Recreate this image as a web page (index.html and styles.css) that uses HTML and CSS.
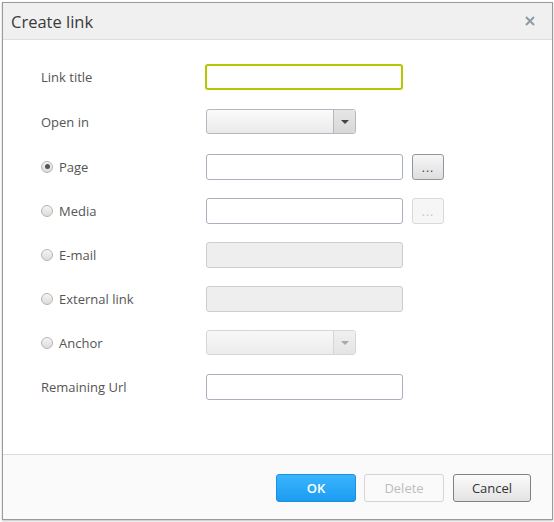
FILE: index.html
```html
<!DOCTYPE html>
<html>
<head>
<meta charset="utf-8">
<link rel="stylesheet" href="styles.css">
</head>
<body>
<div class="dialog">
  <div class="header">
    <span class="title">Create link</span>
    <svg class="close" width="10" height="10" viewBox="0 0 10 10"><path d="M1 1L9 9M9 1L1 9" stroke="#8d9ba5" stroke-width="2"/></svg>
  </div>
  <div class="body">
    <div class="row r-wide">
      <label class="lbl">Link title</label>
      <input class="inp focus" type="text">
    </div>
    <div class="row r-wide">
      <label class="lbl">Open in</label>
      <div class="select"><span class="sel-val"></span><span class="sel-btn"><span class="caret"></span></span></div>
    </div>
    <div class="row">
      <label class="lbl"><span class="radio checked"></span>Page</label>
      <input class="inp" type="text">
      <button class="dots">...</button>
    </div>
    <div class="row">
      <label class="lbl"><span class="radio"></span>Media</label>
      <input class="inp" type="text">
      <button class="dots disabled">...</button>
    </div>
    <div class="row">
      <label class="lbl"><span class="radio"></span>E-mail</label>
      <input class="inp disabled" type="text">
    </div>
    <div class="row">
      <label class="lbl"><span class="radio"></span>External link</label>
      <input class="inp disabled" type="text">
    </div>
    <div class="row">
      <label class="lbl"><span class="radio"></span>Anchor</label>
      <div class="select disabled"><span class="sel-val"></span><span class="sel-btn"><span class="caret"></span></span></div>
    </div>
    <div class="row">
      <label class="lbl">Remaining Url</label>
      <input class="inp" type="text">
    </div>
  </div>
  <div class="footer">
    <button class="btn ok">OK</button>
    <button class="btn del">Delete</button>
    <button class="btn cancel">Cancel</button>
  </div>
</div>
</body>
</html>
```
FILE: styles.css
```css
html, body { margin: 0; padding: 0; background: #fff; }
body { padding: 2px; font-family: "Open Sans", "Noto Sans", sans-serif; }
.dialog {
  width: 549px;
  height: 516px;
  border: 1px solid #9a9a9a;
  box-shadow: 0 1px 2px rgba(0,0,0,0.25);
  display: flex;
  flex-direction: column;
  background: #fff;
}
.header {
  height: 36px;
  background: #f0f0f0;
  border-bottom: 1px solid #dedede;
  display: flex;
  align-items: center;
  justify-content: space-between;
  padding: 0 17px 0 8px;
}
.title { font-size: 16.5px; color: #3a3a3a; }
.close { display: block; }
.body {
  flex: 1;
  padding: 24px 0 0 38px;
  display: flex;
  flex-direction: column;
  gap: 18px;
}
.row { display: flex; align-items: flex-start; height: 26px; }
.r-wide { margin-bottom: 1px; }
.lbl {
  width: 165px;
  flex: none;
  font-size: 13px;
  color: #555;
  height: 25px;
  padding-bottom: 1px;
  display: flex;
  align-items: center;
}
.radio {
  width: 10px; height: 10px;
  border: 1px solid #b5b5b5;
  border-radius: 50%;
  background: linear-gradient(#f4f4f4, #dcdcdc);
  margin-right: 6px;
  position: relative;
  flex: none;
}
.radio.checked::after {
  content: "";
  position: absolute;
  left: 2.5px; top: 2.5px;
  width: 5px; height: 5px;
  border-radius: 50%;
  background: #555;
}
.inp {
  box-sizing: border-box;
  width: 197px;
  height: 26px;
  border: 1px solid #aab0bb;
  border-radius: 3px;
  background: #fff;
  margin: 0;
  padding: 0 4px;
  outline: none;
}
.inp.focus { border: 2px solid #b5c700; margin-left: -1px; width: 198px; }
.inp.disabled { background: #eeeeee; border-color: #cdcdcd; }
.select {
  box-sizing: border-box;
  width: 150px;
  height: 25px;
  border: 1px solid #b3b8c3;
  border-radius: 3px;
  display: flex;
  background: linear-gradient(#fbfbfb, #eaeaea);
  overflow: hidden;
}
.sel-val { flex: 1; }
.sel-btn {
  width: 21px;
  border-left: 1px solid #b3b8c3;
  background: linear-gradient(#e6e6e6, #d8d8d8);
  display: flex;
  align-items: center;
  justify-content: center;
}
.caret {
  width: 0; height: 0;
  border-left: 4px solid transparent;
  border-right: 4px solid transparent;
  border-top: 4px solid #444;
}
.select.disabled { border-color: #d6d6d6; background: linear-gradient(#f8f8f8, #ececec); }
.select.disabled .sel-btn { border-left-color: #d6d6d6; background: linear-gradient(#f0f0f0, #e4e4e4); }
.select.disabled .caret { border-top-color: #a8a8a8; }
.dots {
  box-sizing: border-box;
  margin-left: 9px;
  width: 32px; height: 26px;
  border: 1px solid #8e969e;
  border-radius: 3px;
  background: linear-gradient(#f6f6f6, #dedede);
  font-family: "Open Sans", sans-serif;
  font-size: 12px;
  color: #444;
  padding: 2px 0 0;
  line-height: 1;
  letter-spacing: 1px;
}
.dots.disabled { border-color: #d9d9d9; background: #f6f6f6; color: #c4c4c4; }
.footer {
  height: 65px;
  border-top: 1px solid #dcdcdc;
  background: #fafafa;
  display: flex;
  align-items: center;
  justify-content: flex-end;
  padding: 2px 21px 0 0;
  box-sizing: border-box;
}
.btn {
  box-sizing: border-box;
  width: 80px;
  height: 28px;
  border-radius: 3px;
  font-family: "Open Sans", sans-serif;
  font-size: 13px;
  padding: 0;
  margin: 0;
}
.ok {
  background: linear-gradient(#3ab5fd, #1c9cf0);
  border: 1px solid #1c8fde;
  color: #fff;
  font-weight: 600;
}
.del { margin-left: 8px; border: 1px solid #d4d4d4; background: #fafafa; color: #bdbdbd; }
.cancel {
  margin-left: 9px;
  width: 78px;
  border: 1px solid #7c8187;
  background: linear-gradient(#fbfbfb, #e3e3e3);
  color: #333;
}
```
